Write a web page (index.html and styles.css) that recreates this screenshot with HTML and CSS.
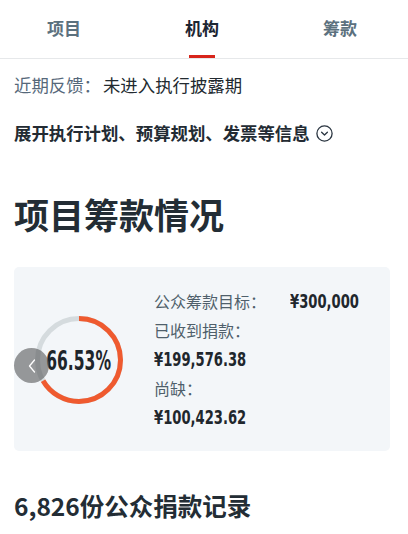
FILE: index.html
```html
<!DOCTYPE html>
<html lang="zh-CN">
<head>
<meta charset="utf-8">
<title>项目筹款情况</title>
<link rel="stylesheet" href="styles.css">
</head>
<body>
<nav class="tabs">
  <div class="tab">项目</div>
  <div class="tab active">机构</div>
  <div class="tab">筹款</div>
</nav>
<main class="content">
  <p class="feedback"><span class="label">近期反馈：</span><span class="value">未进入执行披露期</span></p>
  <p class="expand">展开执行计划、预算规划、发票等信息
    <svg class="expand-icon" width="17" height="17" viewBox="0 0 17 17"><circle cx="8.5" cy="8.5" r="7.6" fill="none" stroke="#2a3540" stroke-width="1.3"/><path d="M5.6 7.2 L8.5 10 L11.4 7.2" fill="none" stroke="#2a3540" stroke-width="1.3" stroke-linecap="round" stroke-linejoin="round"/></svg>
  </p>
  <h1 class="title">项目筹款情况</h1>
  <section class="card">
    <div class="ring">
      <svg width="88" height="88" viewBox="0 0 88 88">
        <circle cx="44" cy="44" r="41.5" fill="none" stroke="#d5dbde" stroke-width="5"/>
        <circle cx="44" cy="44" r="41.5" fill="none" stroke="#ef5a2f" stroke-width="5" stroke-dasharray="173.5 300" transform="rotate(-90 44 44)"/>
      </svg>
      <span class="percent"><span class="squeeze">66.53%</span></span>
    </div>
    <div class="stats">
      <div class="line"><span class="label">公众筹款目标：</span><span class="num goal">¥300,000</span></div>
      <div class="line label">已收到捐款：</div>
      <div class="line"><span class="num">¥199,576.38</span></div>
      <div class="line label">尚缺：</div>
      <div class="line"><span class="num">¥100,423.62</span></div>
    </div>
    <button class="prev" aria-label="上一页">
      <svg width="10" height="16" viewBox="0 0 10 16"><path d="M7.5 2 L2.5 8 L7.5 14" fill="none" stroke="#ffffff" stroke-width="1.3" stroke-linecap="round" stroke-linejoin="round"/></svg>
    </button>
  </section>
  <h2 class="records">6,826份公众捐款记录</h2>
</main>
</body>
</html>
```
FILE: styles.css
```css
* { box-sizing: border-box; }
html, body { margin: 0; padding: 0; background: #ffffff; }
body {
  font-family: "Noto Sans CJK SC", "Noto Sans", sans-serif;
  color: #1f2a33;
  width: 408px;
  overflow: hidden;
}
.tabs {
  display: flex;
  justify-content: space-between;
  height: 59px;
  padding: 0 51px 0 47px;
  border-bottom: 1px solid #e6e8ea;
}
.tab {
  display: flex;
  flex-direction: column;
  align-items: center;
  white-space: nowrap;
  font-size: 17px;
  font-weight: 700;
  line-height: 26px;
  padding-top: 15px;
  color: #5c717e;
}
.tab::after {
  content: "";
  display: block;
  margin-top: auto;
  width: 26px;
  height: 3px;
}
.tab.active { color: #1c2532; }
.tab.active::after { background: #d8251b; }
.content { padding: 0 18px 0 14px; }
.feedback {
  margin: 13px 0 0;
  font-size: 17.4px;
  line-height: 26px;
  white-space: nowrap;
}
.feedback .label { color: #56687a; }
.feedback .value { color: #222a30; margin-left: 2px; }
.expand {
  display: flex;
  align-items: center;
  margin: 22px 0 0;
  font-size: 17.4px;
  font-weight: 700;
  line-height: 26px;
  color: #232b33;
  white-space: nowrap;
}
.expand-icon { margin-left: 6px; flex: none; }
.title {
  margin: 44px 0 0;
  font-size: 35px;
  font-weight: 700;
  line-height: 48px;
  color: #232d35;
}
.card {
  position: relative;
  display: flex;
  align-items: center;
  margin-top: 29px;
  height: 184px;
  padding: 1px 0 0 21px;
  background: #f3f6f9;
  border-radius: 5px;
}
.ring {
  position: relative;
  width: 88px;
  height: 88px;
  flex: none;
}
.ring svg { display: block; }
.percent {
  position: absolute;
  inset: 0;
  display: flex;
  align-items: center;
  justify-content: center;
  padding-top: 2px;
}
.squeeze {
  display: inline-block;
  font-family: "DejaVu Sans", sans-serif;
  font-stretch: condensed;
  font-weight: 700;
  font-size: 27px;
  color: #1d252b;
  transform: scaleX(0.64);
  white-space: nowrap;
}
.stats {
  margin-left: 31px;
  display: flex;
  flex-direction: column;
}
.line {
  font-size: 16px;
  line-height: 29px;
  white-space: nowrap;
}
.label { color: #4f5f6b; }
.num {
  display: inline-block;
  font-family: "DejaVu Sans", sans-serif;
  font-stretch: condensed;
  font-weight: 700;
  font-size: 20px;
  line-height: 29px;
  color: #1f272d;
  transform: scaleX(0.73);
  transform-origin: left center;
}
.goal { margin-left: 24px; }
.prev {
  position: absolute;
  left: 0;
  top: 81px;
  width: 35px;
  height: 35px;
  border: none;
  border-radius: 50%;
  padding: 0;
  background: rgba(90, 92, 94, 0.62);
  display: flex;
  align-items: center;
  justify-content: center;
}
.prev svg { display: block; }
.records {
  margin: 37px 0 0;
  font-size: 24.5px;
  font-weight: 700;
  line-height: 36px;
  color: #232d35;
}
```
